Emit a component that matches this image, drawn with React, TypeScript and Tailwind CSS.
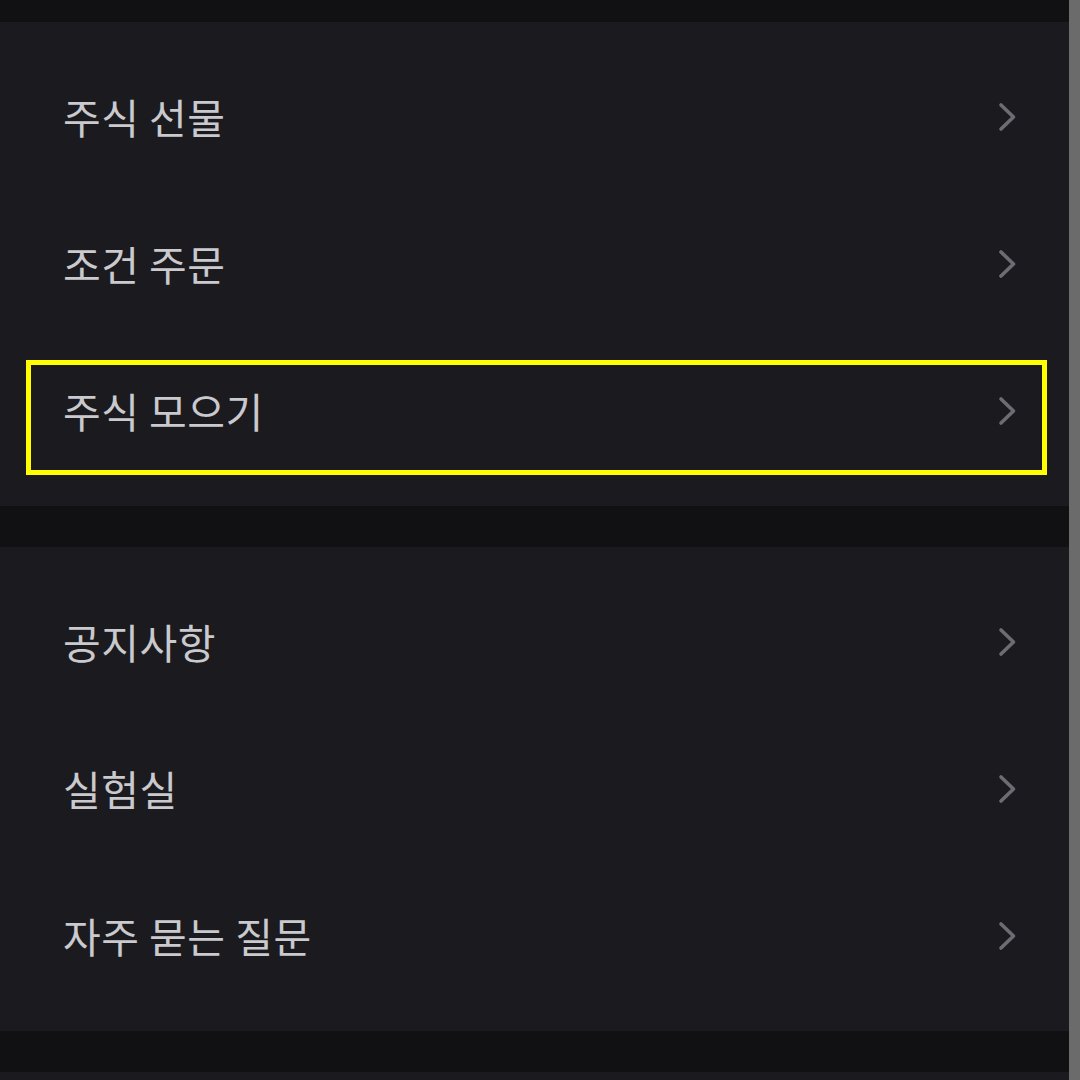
const font = { fontFamily: '"Noto Sans CJK KR", "Noto Sans", sans-serif' };

type Item = { label: string; highlight?: boolean };

const groups: Item[][] = [
  [{ label: '주식 선물' }, { label: '조건 주문' }, { label: '주식 모으기', highlight: true }],
  [{ label: '공지사항' }, { label: '실험실' }, { label: '자주 묻는 질문' }],
];

function Chevron() {
  return (
    <svg width="20" height="30" viewBox="0 0 20 30" fill="none" className="shrink-0">
      <polyline
        points="3,3 15.5,15 3,27"
        stroke="#6c6c72"
        strokeWidth="3.6"
        strokeLinecap="round"
        strokeLinejoin="round"
      />
    </svg>
  );
}

function Row({ item }: { item: Item }) {
  return (
    <div className="relative flex h-[147px] items-center justify-between pl-[63px] pr-[51px]">
      <span className="text-[41px] leading-none tracking-[0.5px] text-[#c9c9ce]" style={font}>
        {item.label}
      </span>
      <Chevron />
      {item.highlight && (
        <div className="pointer-events-none absolute left-[26px] right-[22px] top-[23px] bottom-[9px] border-[5px] border-[#ffff00]" />
      )}
    </div>
  );
}

export default function App() {
  return (
    <div className="flex h-[1080px] w-[1080px] overflow-hidden bg-[#111113]">
      <div className="flex flex-1 flex-col">
        <div className="h-[22px] shrink-0" />
        {groups.map((g, i) => (
          <div key={i} className="flex flex-col">
            <div className="bg-[#1b1b1f] pt-[21px] pb-[22px]">
              {g.map((item) => (
                <Row key={item.label} item={item} />
              ))}
            </div>
            <div className="h-[41px] shrink-0" />
          </div>
        ))}
        <div className="flex-1 bg-[#1b1b1f]" />
      </div>
      <div className="w-[11px] shrink-0 bg-[#6b6b6b]" />
    </div>
  );
}
